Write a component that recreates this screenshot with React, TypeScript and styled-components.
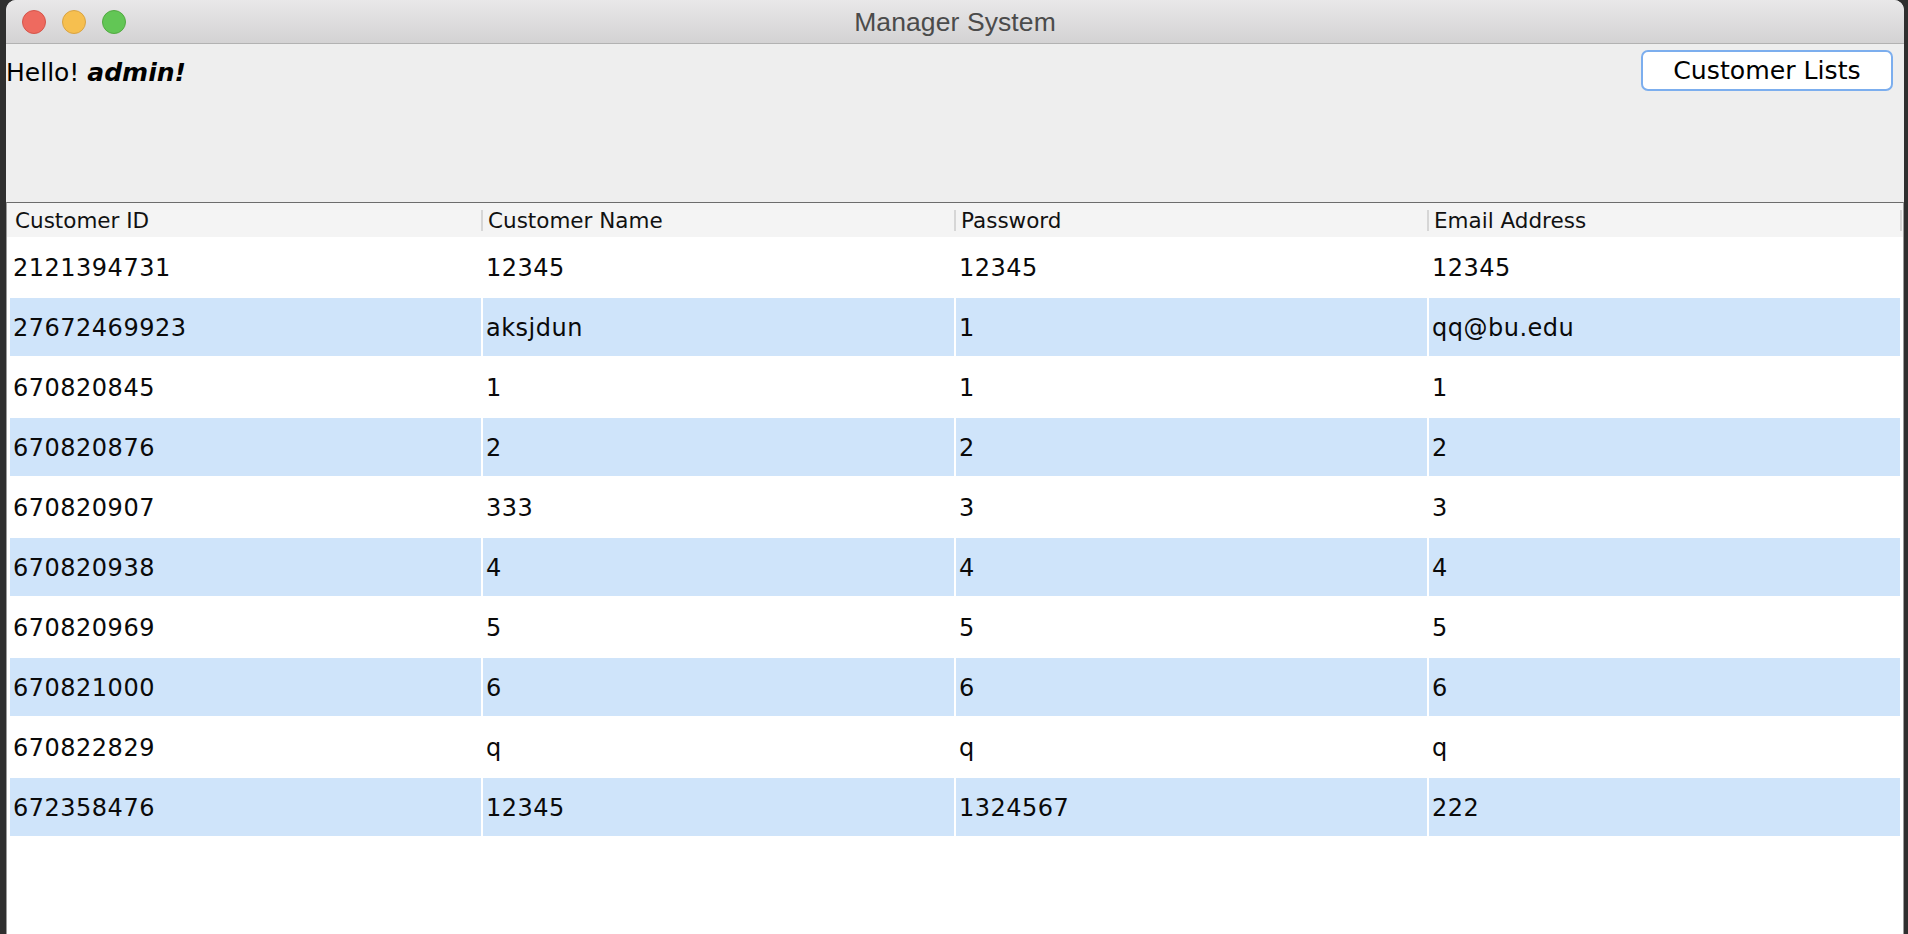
import React from 'react';
import styled, { createGlobalStyle } from 'styled-components';

const GlobalStyle = createGlobalStyle`
  html, body {
    margin: 0;
    padding: 0;
    background: #2f2f2f;
    overflow: hidden;
  }
  #root {
    width: 1908px;
    height: 934px;
  }
`;

const Desktop = styled.div`
  width: 1908px;
  height: 934px;
  box-sizing: border-box;
  padding-left: 6px;
  display: flex;
  background: #2f2f2f;
`;

const Window = styled.div`
  width: 1898px;
  height: 934px;
  display: flex;
  flex-direction: column;
  background: #eeeeee;
  border-radius: 10px 10px 0 0;
  overflow: hidden;
`;

const TitleBar = styled.div`
  height: 43px;
  flex: none;
  border-bottom: 1px solid #b2b2b2;
  background: linear-gradient(#e9e8e9, #d3d2d3);
  display: grid;
  grid-template-columns: 1fr auto 1fr;
  align-items: center;
`;

const Lights = styled.div`
  display: flex;
  gap: 16px;
  padding-left: 16px;
`;

const Light = styled.span<{ $fill: string; $edge: string }>`
  width: 24px;
  height: 24px;
  box-sizing: border-box;
  border-radius: 50%;
  background: ${(p) => p.$fill};
  border: 1px solid ${(p) => p.$edge};
`;

const Title = styled.div`
  padding-top: 2px;
  font-family: "Liberation Sans", Arial, sans-serif;
  font-size: 26.5px;
  color: #4b4b4b;
  letter-spacing: 0.1px;
`;

const TopPanel = styled.div`
  height: 158px;
  flex: none;
  display: flex;
  justify-content: space-between;
  align-items: flex-start;
  background: #eeeeee;
`;

const Greeting = styled.div`
  margin-top: 14px;
  font-family: "DejaVu Sans", "Liberation Sans", sans-serif;
  font-size: 25px;
  line-height: 30px;
  color: #000;
`;

const UserName = styled.b`
  font-style: italic;
  font-weight: bold;
`;

const ListButton = styled.button`
  margin-top: 6px;
  margin-right: 11px;
  width: 252px;
  height: 41px;
  box-sizing: border-box;
  border: 2px solid #7caeee;
  border-radius: 7px;
  background: #ffffff;
  font-family: "DejaVu Sans", "Liberation Sans", sans-serif;
  font-size: 25.2px;
  color: #000;
  padding: 0;
  display: flex;
  align-items: center;
  justify-content: center;
`;

const ScrollPane = styled.div`
  flex: 1;
  background: #ffffff;
  border-top: 1px solid #6c6c6c;
  border-left: 1px solid #9a9a9a;
  border-right: 1px solid #9a9a9a;
`;

const HeaderRow = styled.div`
  height: 34px;
  box-sizing: border-box;
  padding-left: 2px;
  background: #f4f4f4;
  display: grid;
  grid-template-columns: repeat(4, 473px);
`;

const HeaderCell = styled.div`
  position: relative;
  display: flex;
  align-items: center;
  padding-left: 6px;
  padding-top: 1px;
  font-family: "DejaVu Sans", "Liberation Sans", sans-serif;
  font-size: 21.5px;
  color: #111;
  &::after {
    content: '';
    position: absolute;
    right: -1px;
    top: 7px;
    bottom: 6px;
    width: 2px;
    background: #d6d6d6;
  }
`;

const Body = styled.div`
  padding-left: 2px;
  display: flex;
  flex-direction: column;
`;

const Row = styled.div`
  display: grid;
  grid-template-columns: repeat(4, 473px);
  height: 60px;
`;

const Cell = styled.div<{ $striped: boolean }>`
  box-sizing: border-box;
  border: 1px solid #ffffff;
  background: ${(p) => (p.$striped ? '#cfe4fa' : '#ffffff')};
  display: flex;
  align-items: center;
  padding-left: 3px;
  padding-top: 1px;
  font-family: "DejaVu Sans", "Liberation Sans", sans-serif;
  font-size: 24px;
  letter-spacing: 0.5px;
  color: #0a0a0a;
  white-space: nowrap;
  overflow: hidden;
`;

const columns = ['Customer ID', 'Customer Name', 'Password', 'Email Address'];

const rows: string[][] = [
  ['2121394731', '12345', '12345', '12345'],
  ['27672469923', 'aksjdun', '1', 'qq@bu.edu'],
  ['670820845', '1', '1', '1'],
  ['670820876', '2', '2', '2'],
  ['670820907', '333', '3', '3'],
  ['670820938', '4', '4', '4'],
  ['670820969', '5', '5', '5'],
  ['670821000', '6', '6', '6'],
  ['670822829', 'q', 'q', 'q'],
  ['672358476', '12345', '1324567', '222'],
];

export default function App() {
  return (
    <>
      <GlobalStyle />
      <Desktop>
        <Window>
          <TitleBar>
            <Lights>
              <Light $fill="#ee6a5f" $edge="#d4554b" />
              <Light $fill="#f6bf4f" $edge="#d8a344" />
              <Light $fill="#62c655" $edge="#52a942" />
            </Lights>
            <Title>Manager System</Title>
            <span />
          </TitleBar>
          <TopPanel>
            <Greeting>
              Hello! <UserName>admin!</UserName>
            </Greeting>
            <ListButton>Customer Lists</ListButton>
          </TopPanel>
          <ScrollPane>
            <HeaderRow>
              {columns.map((c) => (
                <HeaderCell key={c}>{c}</HeaderCell>
              ))}
            </HeaderRow>
            <Body>
              {rows.map((r, i) => (
                <Row key={i}>
                  {r.map((v, j) => (
                    <Cell key={j} $striped={i % 2 === 1}>
                      {v}
                    </Cell>
                  ))}
                </Row>
              ))}
            </Body>
          </ScrollPane>
        </Window>
      </Desktop>
    </>
  );
}
